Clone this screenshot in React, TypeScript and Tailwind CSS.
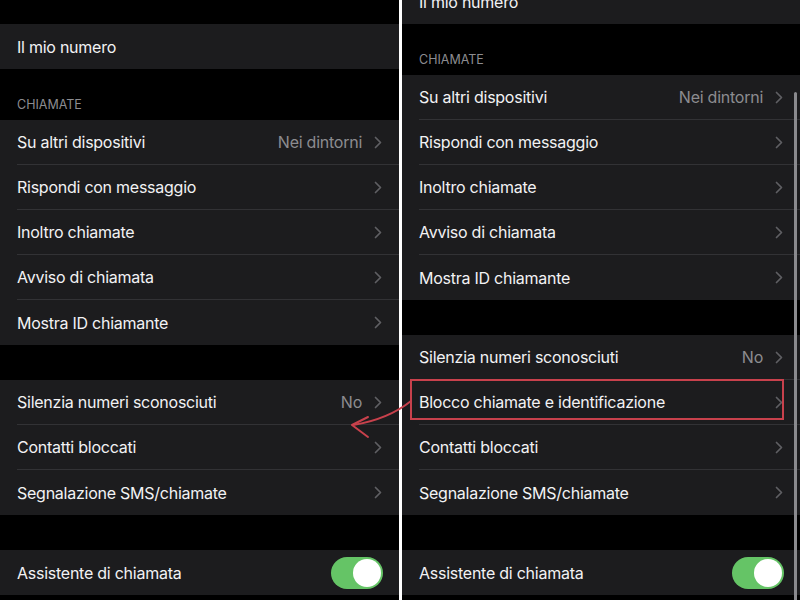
import React from 'react';

type Item = { label: string; value?: string };

const group1: Item[] = [
  { label: 'Su altri dispositivi', value: 'Nei dintorni' },
  { label: 'Rispondi con messaggio' },
  { label: 'Inoltro chiamate' },
  { label: 'Avviso di chiamata' },
  { label: 'Mostra ID chiamante' },
];

const leftGroup2: Item[] = [
  { label: 'Silenzia numeri sconosciuti', value: 'No' },
  { label: 'Contatti bloccati' },
  { label: 'Segnalazione SMS/chiamate' },
];

const rightGroup2: Item[] = [
  { label: 'Silenzia numeri sconosciuti', value: 'No' },
  { label: 'Blocco chiamate e identificazione' },
  { label: 'Contatti bloccati' },
  { label: 'Segnalazione SMS/chiamate' },
];

function Chevron() {
  return (
    <svg width="8" height="13" viewBox="0 0 8 13" className="shrink-0">
      <path d="M1.5 1.5 L6.5 6.5 L1.5 11.5" fill="none" stroke="#5f5f63" strokeWidth="1.7" strokeLinecap="round" strokeLinejoin="round" />
    </svg>
  );
}

function Row({ item, last }: { item: Item; last: boolean }) {
  return (
    <div className="flex h-[45px] pl-[17px]">
      <div className={`flex flex-1 items-center pr-[17px] ${last ? '' : 'border-b border-[#323235]'}`}>
        <span className="flex-1 text-[16px] tracking-[-0.25px] text-[#f2f2f4]">{item.label}</span>
        {item.value && <span className="mr-[12px] text-[16px] tracking-[-0.25px] text-[#8c8c90]">{item.value}</span>}
        <Chevron />
      </div>
    </div>
  );
}

function Group({ items }: { items: Item[] }) {
  return (
    <div className="bg-[#1c1c1e]">
      {items.map((it, i) => (
        <Row key={it.label} item={it} last={i === items.length - 1} />
      ))}
    </div>
  );
}

function Toggle() {
  return (
    <div className="flex h-[32px] w-[52px] items-center justify-end rounded-full bg-[#65c466] p-[2px]">
      <div className="h-[28px] w-[28px] rounded-full bg-white" />
    </div>
  );
}

function Panel({ shifted, group2 }: { shifted: boolean; group2: Item[] }) {
  return (
    <div className={`flex flex-col ${shifted ? '-mt-[21px]' : 'pt-[24px]'}`}>
      <div className="flex h-[45px] items-center bg-[#1c1c1e] pl-[17px]">
        <span className="text-[16px] tracking-[-0.25px] text-[#f2f2f4]">Il mio numero</span>
      </div>
      <div className="flex h-[51px] items-end pb-[5px] pl-[17px]">
        <span className="text-[12.5px] text-[#8c8c90]">CHIAMATE</span>
      </div>
      <Group items={group1} />
      <div className="h-[35px]" />
      <Group items={group2} />
      <div className="h-[35px]" />
      <div className="flex h-[45px] items-center bg-[#1c1c1e] pl-[17px] pr-[16px]">
        <span className="flex-1 text-[16px] tracking-[-0.25px] text-[#f2f2f4]">Assistente di chiamata</span>
        <Toggle />
      </div>
    </div>
  );
}

export default function App() {
  return (
    <div
      className="relative flex h-[600px] w-[800px] overflow-hidden bg-black"
      style={{ fontFamily: 'Inter, "Noto Sans", sans-serif' }}
    >
      <div className="h-full w-[399px] overflow-hidden">
        <Panel shifted={false} group2={leftGroup2} />
      </div>
      <div className="h-full w-[3px] bg-white" />
      <div className="relative h-full flex-1 overflow-hidden">
        <Panel shifted group2={rightGroup2} />
        <div className="absolute right-[3px] top-[92px] h-[520px] w-[3px] rounded-full bg-[#8a8a8e]" />
      </div>

      <div className="absolute left-[410px] top-[379px] h-[41px] w-[374px] border-2 border-[#c8414c]" />
      <svg className="absolute left-0 top-0" width="800" height="600" viewBox="0 0 800 600">
        <path d="M411 401 C 396 413, 378 421, 353 425" fill="none" stroke="#c8414c" strokeWidth="2" strokeLinecap="round" />
        <path d="M368 417 L352 425 L368 437" fill="none" stroke="#c8414c" strokeWidth="2" strokeLinecap="round" strokeLinejoin="round" />
      </svg>
    </div>
  );
}
